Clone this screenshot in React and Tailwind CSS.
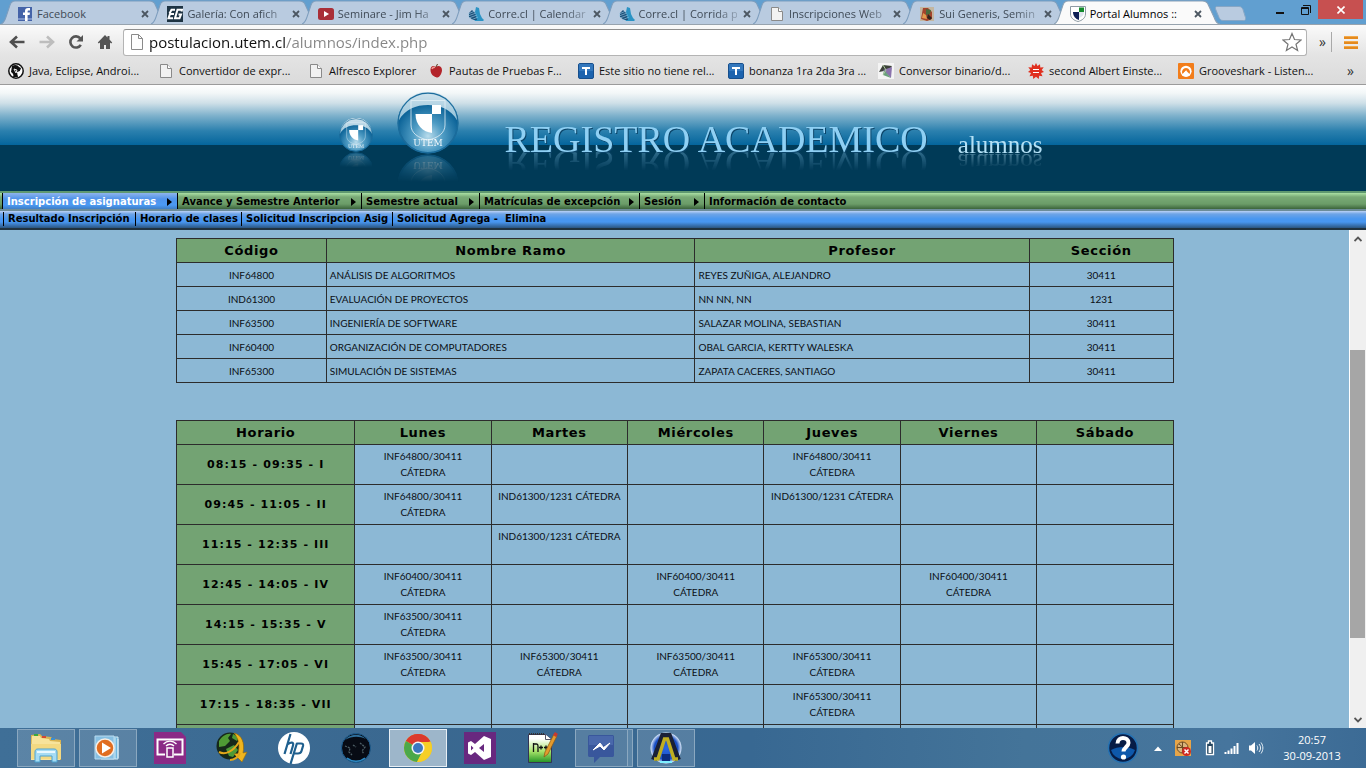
import React from "react";

const UI = "font-['Open_Sans','Noto_Sans',sans-serif]";
const VERDANA = "font-['DejaVu_Sans',sans-serif]";
const CELL = "font-['Lato','Noto_Sans',sans-serif]";

/* ---------- favicons ---------- */

function Fav({ children }) {
  return (
    <svg width="16" height="16" viewBox="0 0 16 16" className="shrink-0" aria-hidden="true">
      {children}
    </svg>
  );
}

const PageIcon = () => (
  <Fav>
    <path d="M2.500 1.500h7l4 4v9h-11z" fill="#f2f2f2" stroke="#8a8a8a" />
    <path d="M9.500 1.500v4h4" fill="#fff" stroke="#8a8a8a" />
  </Fav>
);
const FacebookIcon = () => (
  <Fav>
    <rect x="1" y="1" width="14" height="14" fill="#4463a8" />
    <rect x="1" y="12" width="14" height="2" fill="#7a93c8" />
    <path d="M8 15V9H6V6.500h2V5c0-2 1-3 3-3h2v2.400h-1.300c-.9 0-1.100.4-1.100 1.100v1h2.400L12.600 9h-2v6z" fill="#fff" />
  </Fav>
);
const GalleryIcon = () => (
  <Fav>
    <rect width="16" height="16" fill="#1d3343" />
    <path d="M8 3.700H4.500L2.500 7.500M7 8H3L1.500 12.300H6" fill="none" stroke="#fff" strokeWidth="2" />
    <path d="M14.500 5.500l.5-1.800h-4.500L8 12.300h4.500L14 8.500h-2.500" fill="none" stroke="#fff" strokeWidth="2" />
  </Fav>
);
const YoutubeIcon = () => (
  <Fav>
    <rect y="2" width="16" height="12" rx="2.500" fill="#a92f38" />
    <path d="M6 5l5 3-5 3z" fill="#fff" />
  </Fav>
);
const CorreIcon = () => (
  <Fav>
    <path d="M7 6l1-5 3 1 1 6 2 4 2 2-1 1H7L5 12z" fill="#2b93c4" />
    <path d="M1 7l3-3 3 3 2 7H5L1 11z" fill="#1c4f78" />
    <path d="M0 8l7-3M0 10l8-3M1 12l8-3M3 14l7-3" stroke="#8fc0dc" strokeWidth=".7" />
  </Fav>
);
const SuiIcon = () => (
  <Fav>
    <rect x="1" y="1" width="14" height="14" fill="#c3b6a0" />
    <path d="M4 2h5l4 4v7l-5 2-6-2z" fill="#a4442c" />
    <path d="M7 3l5 1-1 4-4 1z" fill="#4a6a3c" />
    <path d="M4 7l3 2 1 4-5-1z" fill="#e49a4c" />
    <path d="M9 8l4 4-2 2-3-2z" fill="#33251c" />
  </Fav>
);
const UtemIcon = () => (
  <Fav>
    <path d="M.5.500h15V8c0 4-3.500 6.500-7.500 7.500C4 14.500.5 12 .5 8z" fill="#fff" stroke="#8d9aa3" />
    <rect x="9" y="1.500" width="5" height="4.500" fill="#128a2c" />
    <path d="M3 6h6v8C5.500 13 3 10 3 6z" fill="#0d1f55" />
    <path d="M9 6h5c0 3-2 5-5 6z" fill="#dfe5ee" />
  </Fav>
);
const JavaIcon = () => (
  <Fav>
    <circle cx="8" cy="8" r="7.200" fill="#fff" stroke="#111" strokeWidth="1.500" />
    <path d="M4 3c3-2 6-1 7 1l2 1-1 3-3 1 1 5H5c1-2 0-4-2-5z" fill="#111" />
    <path d="M6 6l3 1-1 3zM10 12c1-2 2-2 3-5" stroke="#fff" strokeWidth=".9" fill="none" />
  </Fav>
);
const AppleIcon = () => (
  <Fav>
    <path d="M8 4c2-2 6-1 6 3s-3 7.500-4.500 7.500S8 14 7.500 14 2.500 12 2.500 7 6 2.500 8 4z" fill="#b3242a" />
    <path d="M4 6c.5-1.500 2-2 3-1.500" stroke="#ee9a95" strokeWidth="1.500" fill="none" />
    <path d="M8 4l1.500-3" stroke="#5a3b20" />
  </Fav>
);
const TIcon = () => (
  <Fav>
    <rect x=".5" y=".5" width="15" height="15" rx="1.500" fill="#1c63ae" stroke="#174f8c" />
    <rect x="1" y="1" width="14" height="7" fill="#3277bd" />
    <path d="M4 5h8M8 5v7" stroke="#fff" strokeWidth="2" />
  </Fav>
);
const ConversorIcon = () => (
  <Fav>
    <rect width="16" height="16" fill="#f4f4f4" />
    <path d="M1 9l4-7 9 1-3 4z" fill="#3b4138" />
    <path d="M5 7l9-3-1 11z" fill="#8b74ad" />
    <path d="M6 7l7 8-8-3z" fill="#69a07c" />
    <path d="M5 2l3 5-3 5" stroke="#a9c59a" fill="none" />
  </Fav>
);
const WolframIcon = () => (
  <Fav>
    <path d="M8 0l1.500 3L12 1.200l.3 3.300 3.400-.2-2 2.700L16 9l-3 1 1.500 3.200-3.300-.4-.5 3.200L8 13.700 5.300 16l-.5-3.200-3.300.4L3 10 0 9l2.300-2-2-2.700 3.400.2L4 1.200 6.500 3z" fill="#e0301f" />
    <path d="M5 6.500h6M5 9.500h6" stroke="#fff" strokeWidth="1.200" />
  </Fav>
);
const GrooveIcon = () => (
  <Fav>
    <rect width="16" height="16" rx="1" fill="#f27d1a" />
    <circle cx="8" cy="8.300" r="5.600" fill="#fff" />
    <path d="M4.500 11a4 4 0 1 1 7 0L10 9.500 8 7.500 6.500 9z" fill="#f27d1a" />
    <path d="M6 11.500c0-2 1-3 2.500-3.500" stroke="#fff" fill="none" />
  </Fav>
);

/* ---------- browser chrome ---------- */

const TABS = [
  { title: "Facebook", Icon: FacebookIcon },
  { title: "Galería: Con afich", Icon: GalleryIcon },
  { title: "Seminare - Jim Ha", Icon: YoutubeIcon },
  { title: "Corre.cl | Calendar", Icon: CorreIcon },
  { title: "Corre.cl | Corrida p", Icon: CorreIcon },
  { title: "Inscripciones Web", Icon: PageIcon },
  { title: "Sui Generis, Semin", Icon: SuiIcon },
  { title: "Portal Alumnos ::", Icon: UtemIcon, active: true },
];

function Tab({ title, Icon, active }) {
  return (
    <div className={`relative flex h-6 min-w-0 flex-1 items-center pt-1 pl-4 pr-4 -mr-4 last:mr-0 ${active ? "z-10" : ""}`}>
      <svg className="absolute inset-0 h-full w-full" viewBox="0 0 166 24" preserveAspectRatio="none" aria-hidden="true">
        <path
          d="M0 24C3 23 4 20 5 17L9 5C10 2 11 1 14 1H148C151 1 153 2 154 5L160 18C161 21 163 24 166 24"
          fill={active ? "#fafafa" : "#b9cbe0"}
          stroke={active ? "#8aa0b5" : "#7d9dbd"}
        />
      </svg>
      <a href="#" className="relative flex min-w-0 flex-1 items-center gap-1">
        <Icon />
        <span
          className={`min-w-0 flex-1 whitespace-nowrap text-[11px] leading-4 ${
            active || title === "Facebook"
              ? ""
              : "[mask-image:linear-gradient(to_right,#000_75px,rgba(0,0,0,.3))]"
          } ${active ? "text-black" : "text-[#3f4a56]"}`}
        >
          {title}
        </span>
      </a>
      <button type="button" aria-label="Cerrar pestaña" className="relative ml-1 flex size-3 shrink-0 items-center justify-center">
        <svg width="8" height="8" viewBox="0 0 8 8">
          <path d="M1 1l6 6M7 1L1 7" stroke="#4c5762" strokeWidth="1.800" />
        </svg>
      </button>
    </div>
  );
}

function TabStrip() {
  return (
    <div className="flex h-6 shrink-0 items-start bg-[#619fd0] pl-px pr-[3px]">
      <div className="flex min-w-0 max-w-[1219px] flex-1">
        {TABS.map((t, i) => (
          <Tab key={i} {...t} />
        ))}
      </div>
      <button type="button" aria-label="Nueva pestaña" className="-ml-1.5 mt-1.5 shrink-0">
        <svg width="32" height="15" viewBox="0 0 32 15">
          <path d="M3 .5h22c2 0 3 1 4 3l2.500 8c.5 2 0 3-2 3H9c-2 0-3-1-4-3L1.500 3C1 1.500 1.500.500 3 .5z" fill="#b9cbe0" stroke="#86a6c5" />
        </svg>
      </button>
      <div className="ml-auto flex shrink-0">
        <button type="button" aria-label="Minimizar" className="flex h-[19px] w-7 items-center justify-center">
          <svg width="8" height="12" viewBox="0 0 8 12"><path d="M0 9h8" stroke="#111" strokeWidth="2" /></svg>
        </button>
        <button type="button" aria-label="Restaurar" className="flex h-[19px] w-6 items-center justify-center">
          <svg width="10" height="10" viewBox="0 0 10 10"><path d="M.5 2.500h7v7h-7zM2 .5h7.500V8M.5 3.500h7" fill="none" stroke="#111" /></svg>
        </button>
        <button type="button" aria-label="Cerrar" className="flex h-[19px] w-[45px] items-center justify-center bg-[#c75050]">
          <svg width="8" height="8" viewBox="0 0 8 8"><path d="M.5.500l7 7M7.500.500l-7 7" stroke="#fff" strokeWidth="1.600" /></svg>
        </button>
      </div>
    </div>
  );
}

function Toolbar() {
  return (
    <div className="flex h-8 shrink-0 items-center pt-0.5 pl-2">
      <button type="button" aria-label="Atrás" className="flex w-[30px] items-center">
        <svg width="18" height="16" viewBox="0 0 18 16"><path d="M16.500 8H4M9 2.500L3 8l6 5.500" fill="none" stroke="#4f4f4f" strokeWidth="2.600" /></svg>
      </button>
      <button type="button" aria-label="Adelante" className="flex w-[30px] items-center">
        <svg width="18" height="16" viewBox="0 0 18 16"><path d="M1.500 8H14M9 2.500L15 8l-6 5.500" fill="none" stroke="#bdbdbd" strokeWidth="2.600" /></svg>
      </button>
      <button type="button" aria-label="Recargar" className="flex w-[29px] items-center">
        <svg width="16" height="16" viewBox="0 0 16 16">
          <path d="M12.800 10.800A5.600 5.600 0 1 1 12.300 4.400" fill="none" stroke="#555" strokeWidth="2.600" />
          <path d="M15 1v6.500H8.500z" fill="#555" />
        </svg>
      </button>
      <button type="button" aria-label="Inicio" className="flex w-[26px] items-center">
        <svg width="16" height="16" viewBox="0 0 16 16">
          <path d="M8 1L.8 8.500l1 1L3 8.500V15h4v-4h2v4h4V8.500l1.200 1 1-1L12.500 5.500V2h-2v1.500z" fill="#555" />
        </svg>
      </button>
      <div className="flex h-[27px] min-w-0 flex-1 items-center rounded-[3px] border border-[#b4b4b4] border-t-[#8f8f8f] bg-white pl-[5px] pr-1">
        <svg width="16" height="16" viewBox="0 0 16 16" aria-hidden="true">
          <path d="M2.500.500h7l4 4v11h-11z" fill="#fdfdfd" stroke="#8a8a8a" />
          <path d="M9.500.500v4h4" fill="none" stroke="#8a8a8a" />
        </svg>
        <input
          type="text"
          aria-label="Dirección"
          defaultValue="postulacion.utem.cl/alumnos/index.php"
          className="ml-1 min-w-0 flex-1 bg-[linear-gradient(90deg,#111_137px,#858585_137px)] bg-clip-text text-[15px] leading-6 text-transparent outline-none"
        />
        <button type="button" aria-label="Marcar página">
          <svg width="20" height="20" viewBox="0 0 20 20">
            <path d="M10 1.500l2.500 6 6.500.5-5 4.200 1.600 6.300L10 15l-5.600 3.500L6 12.200 1 8l6.500-.5z" fill="#fff" stroke="#757575" strokeWidth="1.200" />
          </svg>
        </button>
      </div>
      <button type="button" aria-label="Más extensiones" className="ml-3 flex h-5 w-[13px] items-center border-r border-[#a9a9a9] text-[14px] leading-4 text-[#333]">»</button>
      <button type="button" aria-label="Menú" className="ml-3 mr-2">
        <svg width="14" height="14" viewBox="0 0 14 14"><path d="M0 2.500h14M0 7.500h14M0 12.500h14" stroke="#e48a1e" strokeWidth="3" /><path d="M0 1.500h14M0 6.500h14M0 11.500h14" stroke="#f2a94a" /></svg>
      </button>
    </div>
  );
}

const BOOKMARKS = [
  { label: "Java, Eclipse, Androi...", Icon: JavaIcon },
  { label: "Convertidor de expr...", Icon: PageIcon },
  { label: "Alfresco Explorer", Icon: PageIcon, short: true },
  { label: "Pautas de Pruebas F...", Icon: AppleIcon },
  { label: "Este sitio no tiene rel...", Icon: TIcon },
  { label: "bonanza 1ra 2da 3ra ...", Icon: TIcon },
  { label: "Conversor binario/d...", Icon: ConversorIcon },
  { label: "second Albert Einste...", Icon: WolframIcon },
  { label: "Grooveshark - Listen...", Icon: GrooveIcon },
];

function BookmarkBar() {
  return (
    <nav className="flex h-7 shrink-0 items-center border-b border-[#9b9b9b] pl-2 pr-3">
      {BOOKMARKS.map(({ label, Icon, short }) => (
        <a key={label} href="#" className={`flex items-center gap-[5px] whitespace-nowrap text-[11px] leading-4 text-[#111] ${short ? "w-[120px]" : "w-[150px]"}`}>
          <Icon />
          {label}
        </a>
      ))}
      <button type="button" aria-label="Más marcadores" className="ml-auto text-[14px] leading-4 text-[#333]">»</button>
    </nav>
  );
}

/* ---------- site banner ---------- */

function Orb({ size }) {
  return (
    <svg width={size} height={size} viewBox="0 0 62 62" className="[-webkit-box-reflect:below_0px_linear-gradient(transparent_55%,rgba(0,0,0,.55))]" role="img" aria-label="UTEM">
      <defs>
        <radialGradient id={`orb${size}`} cx=".5" cy=".72" r=".55">
          <stop offset="0" stopColor="#b9dcec" />
          <stop offset=".45" stopColor="#4f9cc4" />
          <stop offset="1" stopColor="#0a6297" />
        </radialGradient>
        <linearGradient id={`cap${size}`} x1="0" y1="0" x2="0" y2="1">
          <stop offset="0" stopColor="#d3e5ee" />
          <stop offset="1" stopColor="#8fbfd7" />
        </linearGradient>
      </defs>
      <circle cx="31" cy="31" r="29.800" fill={`url(#orb${size})`} stroke="#1b6c9c" strokeWidth="1.500" />
      <path d="M1.500 29A29.500 29.500 0 0 1 60.500 29C54 17 43 13 31 13S8 17 1.500 29z" fill={`url(#cap${size})`} />
      <circle cx="31" cy="31" r="29.800" fill="none" stroke="#1b6c9c" strokeWidth="1.200" />
      <path d="M14 8.500h34V33c0 8-7 13-17 15-10-2-17-7-17-15z" fill="none" stroke="#e3f0f6" strokeWidth="1" opacity=".8" />
      <path d="M18.500 22H35v19c-9-1-16.500-8-16.500-19z" fill="#fff" />
      <rect x="35" y="13" width="9" height="9" fill="#fff" />
      <text x="31" y="54" textAnchor="middle" fontFamily="DejaVu Serif" fontSize="9" fill="#f2f9fc">UTEM</text>
    </svg>
  );
}

function Banner() {
  return (
    <header className="flex h-[106px] shrink-0 items-start justify-center overflow-hidden bg-[linear-gradient(#fff_0px,#f3f7f8_8px,#cfe0e8_18px,#7cb0cb_31px,#2b80ae_46px,#04659c_60px,#003a57_60px)] pl-4">
      <div className="mt-[33px]"><Orb size={34} /></div>
      <div className="ml-6 mt-[7px]"><Orb size={62} /></div>
      <h1 className="ml-[45px] mt-8 h-11 whitespace-nowrap font-['Liberation_Serif',serif] text-[38px] leading-[44px] text-[#8fd0f4] [text-shadow:1px_1px_0_#0b4468] [-webkit-box-reflect:below_-19px_linear-gradient(transparent_35%,rgba(0,0,0,.5))]">
        REGISTRO ACADEMICO
      </h1>
      <p className="ml-[30px] mt-[46px] h-7 whitespace-nowrap font-['Liberation_Serif',serif] text-[25px] leading-7 text-[#b4e1f6] [-webkit-box-reflect:below_-11px_linear-gradient(transparent_30%,rgba(0,0,0,.55))]">
        alumnos
      </p>
    </header>
  );
}

/* ---------- menus ---------- */

const MENU = [
  { label: "Inscripción de asignaturas", width: "w-[175px]", active: true },
  { label: "Avance y Semestre Anterior", width: "w-[184px]" },
  { label: "Semestre actual", width: "w-[118px]" },
  { label: "Matrículas de excepción", width: "w-[160px]" },
  { label: "Sesión", width: "w-[65px]" },
];

const SUBMENU = [
  { label: "Resultado Inscripción", width: "w-[132px]" },
  { label: "Horario de clases", width: "w-[106px]" },
  { label: "Solicitud Inscripcion Asig", width: "w-[151px]" },
  { label: "Solicitud Agrega -  Elimina", width: "w-[170px]" },
];

function Menus() {
  return (
    <nav className={`shrink-0 text-[10px] font-bold text-black ${VERDANA}`}>
      <div className="flex h-5 border-t-2 border-b-2 border-t-[#5f9870] border-b-[#6c8c99] bg-[linear-gradient(#aae0a4_0px,#79aa76_4px,#6b9c68_11px,#3c643c_16px)] pl-0.5">
        {MENU.map(({ label, width, active }) => (
          <button
            key={label}
            type="button"
            className={`flex h-4 items-center justify-between whitespace-nowrap border-l border-black pt-px pr-[5px] pl-1 text-left leading-4 ${width} ${
              active ? "bg-[linear-gradient(#8fb4ec_0px,#4f93ea_6px,#4b9af4_12px,#3f7ec4_16px)] text-white" : ""
            }`}
          >
            {label}
            <svg width="5" height="8" viewBox="0 0 5 8" className="shrink-0" aria-hidden="true"><path d="M0 0l5 4-5 4z" fill="#000" /></svg>
          </button>
        ))}
        <a href="#" className="flex h-4 items-center whitespace-nowrap border-l border-black pt-px pl-1 leading-4">Información de contacto</a>
      </div>
      <div className="flex h-[19px] border-b-2 border-[#20323f] bg-[linear-gradient(#bcd2f6_0px,#6ea4e6_3px,#4896f0_8px,#4896f0_11px,#2b5580_17px)] pt-px pl-[3px]">
        {SUBMENU.map(({ label, width }) => (
          <a key={label} href="#" className={`flex h-3.5 items-center whitespace-pre border-l border-black pl-1 leading-4 ${width}`}>
            {label}
          </a>
        ))}
      </div>
    </nav>
  );
}

/* ---------- page content ---------- */

const COURSES = [
  ["INF64800", "ANÁLISIS DE ALGORITMOS", "REYES ZUÑIGA, ALEJANDRO", "30411"],
  ["IND61300", "EVALUACIÓN DE PROYECTOS", "NN NN, NN", "1231"],
  ["INF63500", "INGENIERÍA DE SOFTWARE", "SALAZAR MOLINA, SEBASTIAN", "30411"],
  ["INF60400", "ORGANIZACIÓN DE COMPUTADORES", "OBAL GARCIA, KERTTY WALESKA", "30411"],
  ["INF65300", "SIMULACIÓN DE SISTEMAS", "ZAPATA CACERES, SANTIAGO", "30411"],
];

const DAYS = ["Lunes", "Martes", "Miércoles", "Jueves", "Viernes", "Sábado"];

const SCHEDULE = [
  ["08:15 - 09:35 - I", "INF64800/30411 CÁTEDRA", "", "", "INF64800/30411 CÁTEDRA", "", ""],
  ["09:45 - 11:05 - II", "INF64800/30411 CÁTEDRA", "IND61300/1231 CÁTEDRA", "", "IND61300/1231 CÁTEDRA", "", ""],
  ["11:15 - 12:35 - III", "", "IND61300/1231 CÁTEDRA", "", "", "", ""],
  ["12:45 - 14:05 - IV", "INF60400/30411 CÁTEDRA", "", "INF60400/30411 CÁTEDRA", "", "INF60400/30411 CÁTEDRA", ""],
  ["14:15 - 15:35 - V", "INF63500/30411 CÁTEDRA", "", "", "", "", ""],
  ["15:45 - 17:05 - VI", "INF63500/30411 CÁTEDRA", "INF65300/30411 CÁTEDRA", "INF63500/30411 CÁTEDRA", "INF65300/30411 CÁTEDRA", "", ""],
  ["17:15 - 18:35 - VII", "", "", "", "INF65300/30411 CÁTEDRA", "", ""],
  ["", "", "", "", "", "", ""],
];

const TH = `h-6 border border-[#2c2c2c] bg-[#73a373] p-0 text-[13px] font-bold leading-5 tracking-wider text-black ${VERDANA}`;
const TD = `border border-[#2c2c2c] px-[3px] py-0 text-[10px] leading-4 text-[#0b0f14] ${CELL}`;

function CourseTable() {
  return (
    <table className="w-full table-fixed border-collapse">
      <colgroup>
        <col className="w-[15%]" />
        <col className="w-[37%]" />
        <col />
        <col className="w-[144px]" />
      </colgroup>
      <thead>
        <tr>
          {["Código", "Nombre Ramo", "Profesor", "Sección"].map((h) => (
            <th key={h} scope="col" className={TH}>{h}</th>
          ))}
        </tr>
      </thead>
      <tbody>
        {COURSES.map(([code, name, teacher, section]) => (
          <tr key={code} className="h-6">
            <td className={`${TD} text-center`}>{code}</td>
            <td className={TD}>{name}</td>
            <td className={TD}>{teacher}</td>
            <td className={`${TD} text-center`}>{section}</td>
          </tr>
        ))}
      </tbody>
    </table>
  );
}

function ScheduleTable() {
  return (
    <table className="mt-[37px] w-full table-fixed border-collapse">
      <colgroup>
        <col className="w-[178px]" />
      </colgroup>
      <thead>
        <tr>
          {["Horario", ...DAYS].map((h) => (
            <th key={h} scope="col" className={TH}>{h}</th>
          ))}
        </tr>
      </thead>
      <tbody>
        {SCHEDULE.map(([time, ...cells], r) => (
          <tr key={r} className="h-10">
            <th scope="row" className={`border border-[#2c2c2c] bg-[#73a373] p-0 text-[11px] font-bold leading-4 tracking-widest text-black ${VERDANA}`}>{time}</th>
            {cells.map((c, i) => (
              <td key={i} className={`${TD} pt-[3px] text-center align-top`}>
                {c.startsWith("INF") ? (
                  <>
                    {c.split(" ")[0]}
                    <br />
                    {c.split(" ")[1]}
                  </>
                ) : (
                  <span className="whitespace-nowrap">{c}</span>
                )}
              </td>
            ))}
          </tr>
        ))}
      </tbody>
    </table>
  );
}

function ScrollRail() {
  return (
    <div className="flex w-[17px] shrink-0 flex-col items-center border-l border-white bg-[#f0f0f0]" aria-hidden="true">
      <div className="flex h-[17px] items-center">
        <svg width="8" height="6" viewBox="0 0 8 6"><path d="M.5 5L4 1.500 7.500 5" fill="none" stroke="#555" strokeWidth="1.800" /></svg>
      </div>
      <div className="flex min-h-0 w-full flex-1 flex-col pr-px">
        <div className="grow-[103]" />
        <div className="grow-[288] bg-[#a6a6a6]" />
        <div className="grow-[73]" />
      </div>
      <div className="flex h-[17px] items-center">
        <svg width="8" height="6" viewBox="0 0 8 6"><path d="M.5 1L4 4.500 7.500 1" fill="none" stroke="#555" strokeWidth="1.800" /></svg>
      </div>
    </div>
  );
}

/* ---------- taskbar ---------- */

function Glyph({ children, w = 32 }) {
  return (
    <svg width={w} height="32" viewBox={`0 0 ${w} 32`} aria-hidden="true">
      {children}
    </svg>
  );
}

const ExplorerGlyph = () => (
  <Glyph>
    <path d="M1 3l9-1 2 2 9 1 2 2 8 1v20H1z" fill="#d9b452" />
    <path d="M2 4h8l1 2 8 1 1 2 10 1v18H1z" fill="#f7e39b" />
    <path d="M1 12h30v15H1z" fill="#f3d982" />
    <rect x="4" y="2" width="4" height="2" fill="#3ca73c" />
    <rect x="12" y="4" width="4" height="2" fill="#d24a35" />
    <rect x="21" y="6" width="4" height="2" fill="#3b8ed2" />
    <path d="M5 30V20c0-2 1-3 3-3h16c2 0 3 1 3 3v10h-5v-6H10v6z" fill="#a6dcf4" stroke="#4da2cf" />
    <path d="M7 20h18" stroke="#e8f8ff" strokeWidth="2" />
  </Glyph>
);
const MediaGlyph = () => (
  <Glyph>
    <path d="M9 5h17v22H9z" fill="#6fb6dd" stroke="#d3ecf8" />
    <path d="M23 6v21M26 7v19" stroke="#d8eef9" strokeWidth="1" />
    <path d="M3 4h19v23H3z" fill="#86bfe2" stroke="#b9dcf0" />
    <circle cx="13" cy="16" r="9" fill="#e06d20" stroke="#f6ede4" strokeWidth="1.500" />
    <path d="M10 10.500l9 5.500-9 5.500z" fill="#fff" />
  </Glyph>
);
const ConnectGlyph = () => (
  <Glyph>
    <path d="M0 0h27l5 5v27H0z" fill="#8a2a86" />
    <path d="M11 22.500H3.500v-15h25v15H20" fill="none" stroke="#fff" strokeWidth="2" />
    <rect x="13" y="16" width="6" height="9" fill="#8a2a86" stroke="#fff" strokeWidth="1.500" />
    <path d="M12 14a5.500 5.500 0 0 1 8 0M9.500 12a9 9 0 0 1 13 0" fill="none" stroke="#fff" strokeWidth="1.300" />
  </Glyph>
);
const GlobeGlyph = () => (
  <Glyph>
    <circle cx="14" cy="14" r="13.500" fill="#16281a" />
    <path d="M3 9c3-5 8-8 12-7l-3 4 2 3-5 5-6 1zM10 17l8-4 4 5-5 7-4-1zM17 2l5 3-1 4-5-3z" fill="#4f9a35" />
    <path d="M18 1c8 2 11 10 9 20l4-1-5 10-8-8 4-.5C24 14 23 7 18 1z" fill="#efb51f" stroke="#9c6d07" strokeWidth=".6" />
    <path d="M3 20c6 3 14 0 20-10" fill="none" stroke="#e2a71b" strokeWidth="2" />
    <path d="M14 28c5 0 8-3 10-7" fill="none" stroke="#e2a71b" strokeWidth="2" />
  </Glyph>
);
const HpGlyph = () => (
  <Glyph>
    <circle cx="16" cy="16" r="16" fill="#fff" />
    <path d="M12.500 2L6.500 22M10 12c3-2 6-2 5 1.500L12.500 22M19 11l-6.500 21M18.500 11.500h4.500c2 0 2.300 1 2 2.500l-1.500 5c-.6 2-1.500 2.500-3.500 2.500h-3.500" fill="none" stroke="#1e5f8e" strokeWidth="2.200" />
  </Glyph>
);
const SphereGlyph = () => (
  <Glyph>
    <circle cx="16" cy="16" r="14.500" fill="#070b14" stroke="#1d5f92" strokeWidth="1" />
    <path d="M5 8a14 14 0 0 1 21-1c-7-3-14-3-21 1z" fill="#2f6f9c" />
    <path d="M5 14l5 2-1 4 3 3M20 11l5 4-3 4 2 3M13 13l3 2" fill="none" stroke="#4d5f66" strokeWidth="1.300" strokeDasharray="2 1" />
    <path d="M7 26a14 14 0 0 0 18 0" fill="none" stroke="#2d8cc8" strokeWidth="1.500" />
  </Glyph>
);
const ChromeGlyph = () => (
  <Glyph>
    <circle cx="16" cy="16" r="14" fill="#f3c81c" />
    <path d="M16 16L3.900 9A14 14 0 0 1 28.100 9z" fill="#dc3a2c" />
    <path d="M3.900 9A14 14 0 0 0 15 30l6-11-5-3z" fill="#4ba84a" />
    <path d="M15 30l7-14-6-6h12.500A14 14 0 0 1 15 30z" fill="#f6cf26" />
    <path d="M16 9.500L3.900 9A14 14 0 0 1 28.500 9.500z" fill="#dc3a2c" />
    <circle cx="16" cy="16" r="6.500" fill="#f2f4f5" />
    <circle cx="16" cy="16" r="5" fill="#3c78c0" />
  </Glyph>
);
const VsGlyph = () => (
  <Glyph>
    <rect width="32" height="32" fill="#68287f" />
    <path d="M20 4l7 3v18l-7 3-9-8-4 3-3-1.500v-11L7 9l4 3z" fill="#fff" />
    <path d="M20 12v8l-5-4zM7 13.500v5L9.500 16z" fill="#68287f" />
  </Glyph>
);
const NotepadGlyph = () => (
  <Glyph>
    <defs>
      <linearGradient id="np" x1="0" y1="0" x2="0" y2="1">
        <stop offset=".15" stopColor="#fff" /><stop offset=".6" stopColor="#a7e36a" /><stop offset="1" stopColor="#239324" />
      </linearGradient>
    </defs>
    <path d="M2.500 2.500h17l6 5v23h-23z" fill="url(#np)" stroke="#335" />
    <path d="M3 2h16" stroke="#333" strokeWidth="2" strokeDasharray="1 1" />
    <path d="M19.500 2.500v5h6" fill="#fff" stroke="#556" />
    <path d="M7.500 20v-9M7.500 12h3c1.500 0 1.500 1 1.500 2v6M13 15.500h4M15 13.500v4M18 15.500h4M20 13.500v4" fill="none" stroke="#111" strokeWidth="1.300" />
    <path d="M18 25l1-5L28 2l3 2-9 18z" fill="#e39b2e" stroke="#8a5412" strokeWidth=".7" />
    <path d="M27 3l2-3 3 2-2 3z" fill="#c53b2e" />
  </Glyph>
);
const MessengerGlyph = () => (
  <Glyph w={38}>
    <path d="M5 3h22c1.500 0 2 .5 2 2v18c0 1.500-.5 2-2 2H15l-6 6v-6H5c-1.500 0-2-.5-2-2V5c0-1.500.5-2 2-2z" fill="#39579c" />
    <path d="M4 4h24v9H4z" fill="#4968ab" />
    <path d="M8 18l7-7 3.500 4.500L25 11l-6 7-4-4z" fill="#fff" stroke="#fff" />
  </Glyph>
);
const AresGlyph = () => (
  <Glyph>
    <defs>
      <radialGradient id="ares"><stop offset="0" stopColor="#2b67e2" /><stop offset=".75" stopColor="#1a4fc4" /><stop offset="1" stopColor="#dceaf9" /></radialGradient>
    </defs>
    <circle cx="16" cy="16" r="15.500" fill="url(#ares)" />
    <path d="M4 28L13 4h6l9 24" fill="none" stroke="#1a2036" strokeWidth="6" />
    <path d="M4 27h4L14.500 7h3L24 27h4" fill="none" stroke="#bfae22" strokeWidth="3.500" />
    <path d="M12 22h8v7h-8z" fill="#0c2c80" />
    <path d="M10 30h12" stroke="#7ff0ff" strokeWidth="2" />
  </Glyph>
);

const PLAIN = "border-transparent";
const RUNNING = "border-[#8ba8c0] bg-white/15";
const TASKS = [
  ["Explorador", ExplorerGlyph, RUNNING],
  ["Reproductor", MediaGlyph, RUNNING],
  ["Connect", ConnectGlyph, PLAIN],
  ["Globo", GlobeGlyph, PLAIN],
  ["HP", HpGlyph, PLAIN],
  ["Esfera", SphereGlyph, PLAIN],
  ["Chrome", ChromeGlyph, "border-[#e8eff5] bg-[#9db6ca]"],
  ["Visual Studio", VsGlyph, PLAIN],
  ["Notepad++", NotepadGlyph, PLAIN],
  ["Messenger", MessengerGlyph, `${RUNNING} shadow-[inset_-4px_0_0_#5d86a8,inset_-5px_0_0_#8ba8c0]`],
  ["Ares", AresGlyph, RUNNING],
];

function Taskbar() {
  return (
    <footer className="flex h-10 shrink-0 items-center bg-[linear-gradient(90deg,#3f6f97_0%,#3a6890_30%,#386892_55%,#447499_75%,#46759d_90%,#3c6b95_100%)] pl-[17px]">
      <div className="flex gap-1">
        {TASKS.map(([name, G, skin]) => (
          <button key={name} type="button" aria-label={name} className={`flex h-[38px] w-[58px] items-center justify-center border ${skin}`}>
            <G />
          </button>
        ))}
      </div>
      <div className="ml-auto flex items-center text-white">
        <button type="button" aria-label="Ayuda">
          <svg width="32" height="32" viewBox="0 0 32 32">
            <circle cx="16" cy="16" r="14.500" fill="#071c46" stroke="#2472b4" strokeWidth="1.500" />
            <path d="M4 18a12.500 12.500 0 0 0 24 0c-7-4-17-4-24 0z" fill="#0e58ab" />
            <path d="M10.500 11.500c0-4 3-5.500 5.500-5.500s5.500 1.500 5.500 5-5 4.500-5 8.500" fill="none" stroke="#fff" strokeWidth="4" />
            <circle cx="16.500" cy="25" r="2.600" fill="#fff" />
          </svg>
        </button>
        <button type="button" aria-label="Iconos ocultos" className="ml-[15px]">
          <svg width="8" height="5" viewBox="0 0 8 5"><path d="M0 5l4-4.500L8 5z" fill="#fff" /></svg>
        </button>
        <svg width="16" height="16" viewBox="0 0 16 16" className="ml-[13px]" aria-hidden="true">
          <rect width="16" height="16" fill="#e7a548" />
          <circle cx="7.500" cy="7.500" r="5.500" fill="#d9b47c" stroke="#6b4a22" />
          <path d="M2 7.500h11M7.500 2v11M4 4l8 7" stroke="#6b4a22" />
          <circle cx="11.500" cy="11.500" r="4.500" fill="#cf2a22" />
          <path d="M9.500 9.500l4 4M13.500 9.500l-4 4" stroke="#fff" strokeWidth="1.500" />
        </svg>
        <svg width="10" height="16" viewBox="0 0 10 16" className="ml-[14px]" aria-hidden="true">
          <path d="M3.500 1h3v2h2v11.500h-7V3h2z" fill="#23455f" stroke="#fff" strokeWidth="1.300" />
          <path d="M3.500 6h3v7h-3z" fill="#fff" />
        </svg>
        <svg width="16" height="14" viewBox="0 0 16 14" className="ml-[9px]" aria-hidden="true">
          <path d="M1.500 13v-2M4.500 13V9.500M7.500 13V7.500M10.500 13V5M13.500 13V2" stroke="#fff" strokeWidth="2" />
        </svg>
        <svg width="16" height="16" viewBox="0 0 16 16" className="ml-2" aria-hidden="true">
          <path d="M1 5.500h2L7 2v12l-4-3.500H1z" fill="#fff" />
          <path d="M9 5.500c1 1.500 1 3.500 0 5M11 4c2 2.500 2 5.500 0 8M13 2.500c2.500 3.500 2.500 7.500 0 11" fill="none" stroke="#e8f0f6" />
        </svg>
        <div className="ml-2 mr-3.5 w-20 text-center text-[11px] leading-4">
          <p>20:57</p>
          <p>30-09-2013</p>
        </div>
      </div>
    </footer>
  );
}

export default function App() {
  return (
    <div className={`flex h-screen flex-col overflow-hidden ${UI}`}>
      <TabStrip />
      <div className="shrink-0 border-t border-[#97a3ae] bg-[linear-gradient(#fafafa,#e4e4e4_50%,#dadada)]">
        <Toolbar />
        <BookmarkBar />
      </div>
      <Banner />
      <Menus />
      <div className="flex min-h-0 flex-1">
        <main className="min-w-0 flex-1 overflow-hidden bg-[#8cb8d5] pt-2 pl-px">
          <div className="mx-auto w-[74%]">
            <CourseTable />
            <ScheduleTable />
          </div>
        </main>
        <ScrollRail />
      </div>
      <Taskbar />
    </div>
  );
}
